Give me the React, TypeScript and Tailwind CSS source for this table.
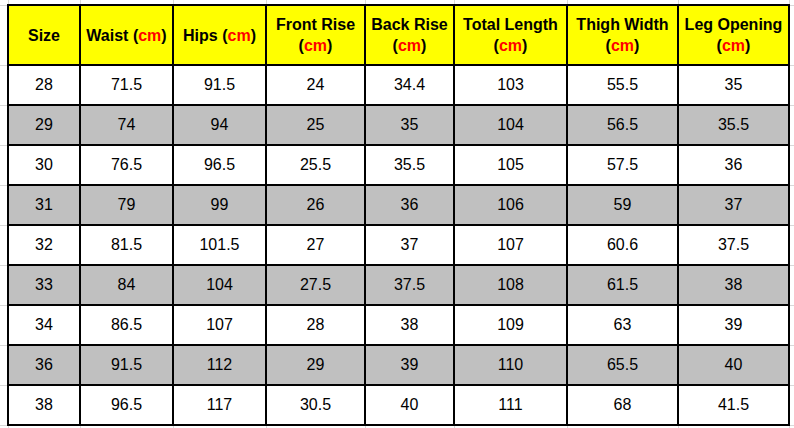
import React from "react";

const cols = [72, 93, 93, 99, 89, 113, 111, 111];
const headers: { label: string; cm: boolean }[] = [
  { label: "Size", cm: false },
  { label: "Waist", cm: true },
  { label: "Hips", cm: true },
  { label: "Front Rise", cm: true },
  { label: "Back Rise", cm: true },
  { label: "Total Length", cm: true },
  { label: "Thigh Width", cm: true },
  { label: "Leg Opening", cm: true },
];
const rows = [
  ["28", "71.5", "91.5", "24", "34.4", "103", "55.5", "35"],
  ["29", "74", "94", "25", "35", "104", "56.5", "35.5"],
  ["30", "76.5", "96.5", "25.5", "35.5", "105", "57.5", "36"],
  ["31", "79", "99", "26", "36", "106", "59", "37"],
  ["32", "81.5", "101.5", "27", "37", "107", "60.6", "37.5"],
  ["33", "84", "104", "27.5", "37.5", "108", "61.5", "38"],
  ["34", "86.5", "107", "28", "38", "109", "63", "39"],
  ["36", "91.5", "112", "29", "39", "110", "65.5", "40"],
  ["38", "96.5", "117", "30.5", "40", "111", "68", "41.5"],
];

export default function App() {
  return (
    <div
      className="w-[794px] h-[428px] overflow-hidden bg-white text-black"
      style={{ fontFamily: '"Liberation Sans", Arial, sans-serif' }}
    >
      <table className="border-collapse table-fixed w-[794px]">
        <colgroup>
          <col className="w-[8px]" />
          {cols.map((w, i) => (
            <col key={i} style={{ width: w }} />
          ))}
          <col className="w-[5px]" />
        </colgroup>
        <tbody>
          <tr>
            <td className="h-[5px] p-0" />
            {cols.map((_, i) => (
              <td key={i} className="h-[5px] p-0 border-x border-[#d9d9d9]" />
            ))}
            <td className="h-[5px] p-0" />
          </tr>
          <tr>
            <td className="p-0 border-y border-[#d9d9d9]" />
            {headers.map((h, i) => (
              <td
                key={i}
                className="h-[60px] p-0 px-1 border-2 border-black bg-[#ffff00] text-center align-middle text-[16px] font-bold leading-[21px]"
              >
                {h.label}
                {h.cm && (
                  <>
                    {" "}(<span className="text-[#ff0000]">cm</span>)
                  </>
                )}
              </td>
            ))}
            <td className="p-0 border-y border-[#d9d9d9]" />
          </tr>
          {rows.map((r, ri) => (
            <tr key={ri}>
              <td className="p-0 border-y border-[#d9d9d9]" />
              {r.map((v, ci) => (
                <td
                  key={ci}
                  className={`h-[40px] p-0 border-2 border-black text-center align-middle text-[16px] ${
                    ri % 2 === 1 ? "bg-[#c0c0c0]" : "bg-white"
                  }`}
                >
                  {v}
                </td>
              ))}
              <td className="p-0 border-y border-[#d9d9d9]" />
            </tr>
          ))}
          <tr>
            <td className="h-[5px] p-0" />
            {cols.map((_, i) => (
              <td key={i} className="h-[5px] p-0 border-x border-[#d9d9d9]" />
            ))}
            <td className="h-[5px] p-0" />
          </tr>
        </tbody>
      </table>
    </div>
  );
}
